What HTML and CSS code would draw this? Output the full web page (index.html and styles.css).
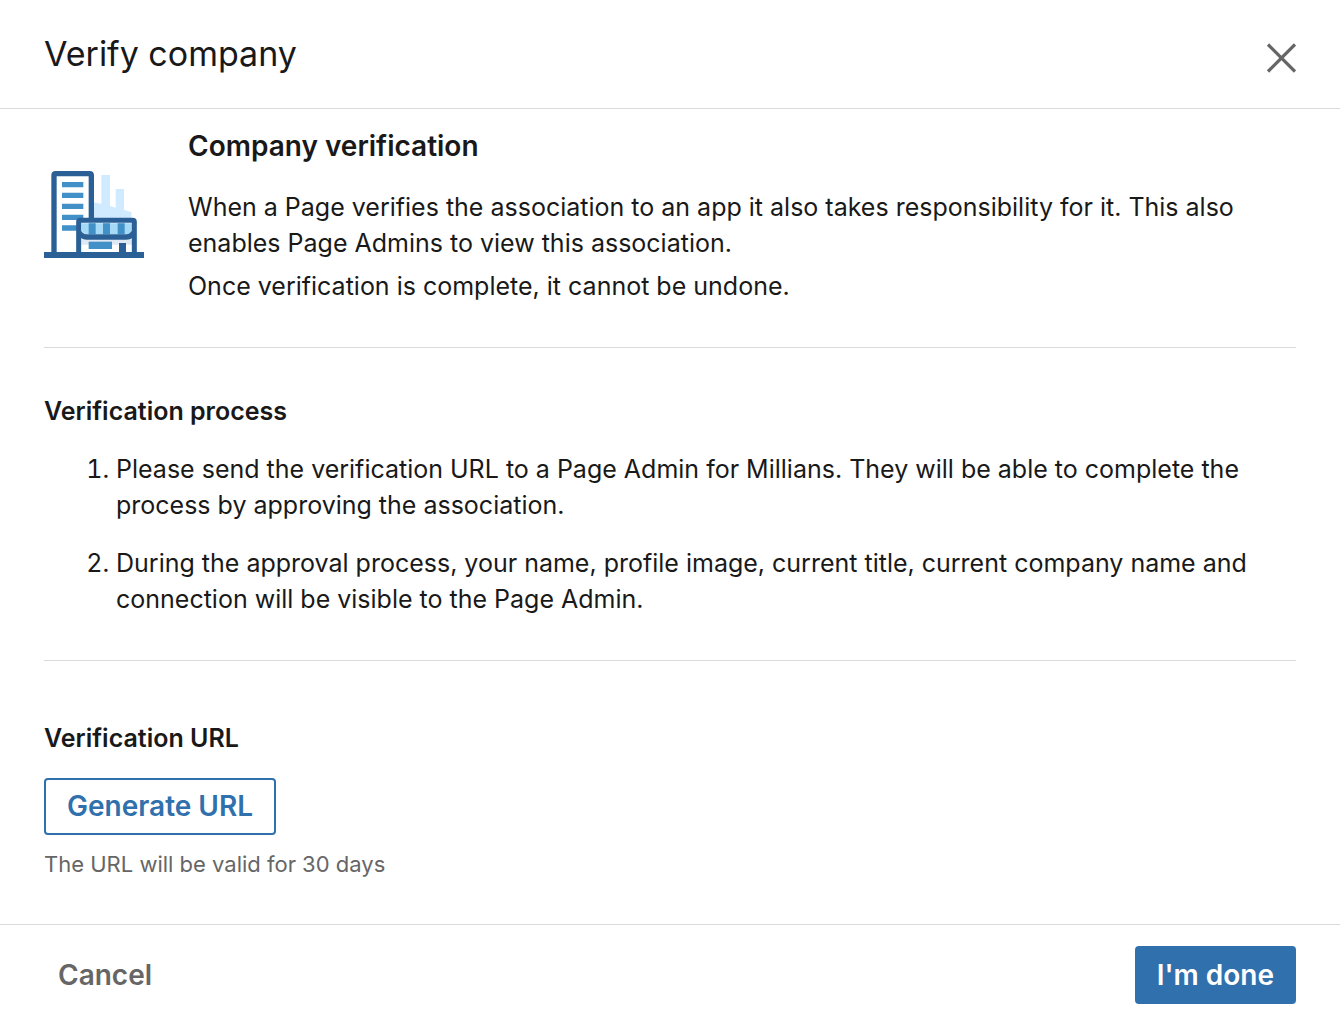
FILE: index.html
```html
<!DOCTYPE html>
<html lang="en">
<head>
<meta charset="utf-8">
<meta name="viewport" content="width=device-width, initial-scale=1">
<title>Verify company</title>
<link rel="stylesheet" href="styles.css">
</head>
<body>
<main class="dialog" role="dialog" aria-labelledby="dialog-title">
  <header class="dialog-header">
    <h1 class="dialog-title" id="dialog-title">Verify company</h1>
    <button class="close-button" type="button" aria-label="Close">
      <svg class="close-icon" viewBox="0 0 30 30" aria-hidden="true"><path d="M2 1.500 29 28.500M29 1.500 2 28.500" fill="none" stroke="currentColor" stroke-width="3.200"/></svg>
    </button>
  </header>

  <div class="dialog-body">
    <section class="intro">
      <svg class="company-icon" viewBox="30 30 300 264" aria-hidden="true">
        <path d="M180 127 202 132V45H228V138L245 143V87H270V150L292 156V176H180Z" fill="#d0eaff"/>
        <path d="M60 278V46Q60 41 65 41H167Q172 41 172 46V176" fill="none" stroke="#2a6096" stroke-width="16"/>
        <path d="M84 66H148V82H84ZM84 98H148V114H84ZM84 131H148V147H84ZM84 164H148V180H84ZM84 196H130V212H84Z" fill="#4290c8"/>
        <path d="M134 186H302V278H134Z" fill="#fff"/>
        <path d="M142 238H294V254H142Z" fill="#dfe8f3"/>
        <path d="M142 190H294V210Q290 222 278 223H158Q146 220 142 210Z" fill="#a5daf7"/>
        <path d="M164 190H185V223H164ZM207 190H228V223H207ZM251 190H272V223H251Z" fill="#4290c8"/>
        <path d="M134 280V186Q134 181 139 181H296Q301 181 301 186V280" fill="none" stroke="#2a6096" stroke-width="15"/>
        <path d="M136 203Q145 223 159 223H276Q290 222 299 203V230Q292 239 276 239H159Q145 239 136 230Z" fill="#2a6096"/>
        <path d="M164 245H234V267H164Z" fill="#4290c8"/>
        <path d="M255 249H276V280H255ZM30 276H330V294H30Z" fill="#2a6096"/>
      </svg>
      <div class="intro-text">
        <h2 class="intro-title">Company verification</h2>
        <p class="text">When a Page verifies the association to an app it also takes responsibility for it. This also enables Page Admins to view this association.</p>
        <p class="text note">Once verification is complete, it cannot be undone.</p>
      </div>
    </section>

    <section class="process">
      <h3 class="section-title">Verification process</h3>
      <ol class="steps">
        <li class="step">Please send the verification URL to a Page Admin for Millians. They will be able to complete the process by approving the association.</li>
        <li class="step">During the approval process, your name, profile image, current title, current company name and connection will be visible to the Page Admin.</li>
      </ol>
    </section>

    <section class="url">
      <h3 class="section-title">Verification URL</h3>
      <button class="button button-outline" type="button">Generate URL</button>
      <p class="hint">The URL will be valid for 30 days</p>
    </section>
  </div>

  <footer class="dialog-footer">
    <button class="button button-plain" type="button">Cancel</button>
    <button class="button button-primary" type="button">I'm done</button>
  </footer>
</main>
</body>
</html>
```
FILE: styles.css
```css
* {
  box-sizing: border-box;
}

body {
  margin: 0;
  background: #fff;
  color: #191919;
  font-family: Inter, "Liberation Sans", sans-serif;
  font-size: 25px;
  line-height: 36px;
}

h1, h2, h3, p, ol {
  margin: 0;
}

button {
  font: inherit;
  cursor: pointer;
}

.dialog-header {
  display: flex;
  justify-content: space-between;
  align-items: flex-start;
  padding: 32px 44px;
  border-bottom: 1px solid #d9d9d9;
}

.dialog-title {
  font-size: 34px;
  font-weight: 400;
  line-height: 44px;
}

.close-button {
  display: flex;
  padding: 11px 0 0;
  border: 0;
  background: none;
  color: #666;
}

.close-icon {
  width: 30px;
  height: 30px;
}

.dialog-body {
  padding: 0 44px;
}

.intro {
  display: flex;
  gap: 44px;
  padding: 17px 0 43px;
  border-bottom: 1px solid #d9d9d9;
}

.company-icon {
  flex: none;
  width: 100px;
  height: 88px;
  margin-top: 44px;
}

.intro-title {
  margin-bottom: 23px;
  font-size: 28px;
  font-weight: 600;
  line-height: 40px;
}

.note {
  margin-top: 7px;
}

.section-title {
  font-size: 25px;
  font-weight: 600;
}

.process {
  padding: 45px 0 43px;
  border-bottom: 1px solid #d9d9d9;
}

.steps {
  margin-top: 22px;
  padding-left: 72px;
}

.step + .step {
  margin-top: 22px;
}

.url {
  padding: 59px 0 44px;
}

.button {
  padding: 9px 20px 8px;
  border: 2px solid transparent;
  border-radius: 4px;
  font-size: 28px;
  font-weight: 600;
  line-height: 37px;
}

.button-outline {
  margin-top: 22px;
  padding: 8px 21px;
  border-color: #3070ad;
  background: #fff;
  color: #3070ad;
}

.button-plain {
  padding: 9px 12px 8px;
  background: none;
  color: #666;
}

.button-primary {
  background: #3070ad;
  color: #fff;
}

.hint {
  margin-top: 13px;
  color: #666;
  font-size: 22px;
  line-height: 32px;
}

.dialog-footer {
  display: flex;
  justify-content: space-between;
  padding: 21px 44px 22px;
  border-top: 1px solid #d9d9d9;
}
```
